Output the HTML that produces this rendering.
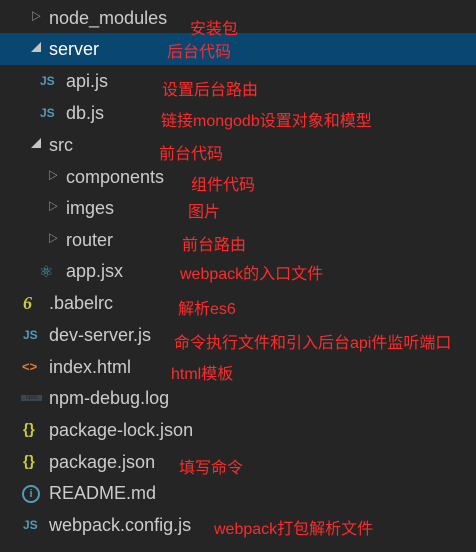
<!DOCTYPE html><html><head><meta charset="utf-8"><style>
body{margin:0;width:476px;height:552px;background:#252526;overflow:hidden;position:relative;font-family:"Liberation Sans","Noto Sans CJK SC",sans-serif}
.r{position:absolute;left:0;width:476px;height:32px;}
.t{position:absolute;color:#cccccc;font-size:18px;line-height:32px;white-space:nowrap}
.a{position:absolute;color:#ff2b2b;font-size:16px;white-space:nowrap;font-family:"Liberation Sans","WenQuanYi Zen Hei",sans-serif}
.js{position:absolute;color:#519aba;font-size:12px;font-weight:bold;line-height:32px}
.ar{position:absolute;color:#c5c5c5;font-size:10px;line-height:32px}
.y{position:absolute;color:#cbcb41;font-size:15px;font-weight:bold;line-height:32px}
</style></head><body>
<div class="r" style="top:33px;background:#094771"></div>
<span class="ar" style="left:31px;top:2px">&#9655;</span><span class="t" style="left:49px;top:2px">node_modules</span>
<span class="ar" style="left:31px;top:33px">&#9698;</span><span class="t" style="left:49px;top:33px;color:#fff">server</span>
<span class="js" style="left:40px;top:65px">JS</span><span class="t" style="left:66px;top:65px">api.js</span>
<span class="js" style="left:40px;top:97px">JS</span><span class="t" style="left:66px;top:97px">db.js</span>
<span class="ar" style="left:31px;top:129px">&#9698;</span><span class="t" style="left:49px;top:129px">src</span>
<span class="ar" style="left:48px;top:161px">&#9655;</span><span class="t" style="left:66px;top:161px">components</span>
<span class="ar" style="left:48px;top:192px">&#9655;</span><span class="t" style="left:66px;top:192px">imges</span>
<span class="ar" style="left:48px;top:224px">&#9655;</span><span class="t" style="left:66px;top:224px">router</span>
<span style="position:absolute;left:39px;top:262px;color:#519aba;font-size:16px">&#9883;</span><span class="t" style="left:66px;top:255px">app.jsx</span>
<span class="y" style="left:23px;top:287px;font-style:italic;font-family:'Liberation Serif',serif;font-size:18px">6</span><span class="t" style="left:49px;top:287px">.babelrc</span>
<span class="js" style="left:23px;top:319px">JS</span><span class="t" style="left:49px;top:319px">dev-server.js</span>
<span class="js" style="left:22px;top:351px;color:#e37933;font-size:13px">&lt;&gt;</span><span class="t" style="left:49px;top:351px">index.html</span>
<span style="position:absolute;left:21px;top:395px;width:21px;height:6px;background:#3a4650;color:#252526;font-size:6px;line-height:6px;text-align:center">npm</span><span class="t" style="left:49px;top:382px">npm-debug.log</span>
<span class="y" style="left:23px;top:414px">{}</span><span class="t" style="left:49px;top:414px">package-lock.json</span>
<span class="y" style="left:23px;top:446px">{}</span><span class="t" style="left:49px;top:446px">package.json</span>
<span style="position:absolute;left:22px;top:485px;width:14px;height:14px;border:2px solid #519aba;border-radius:50%;color:#519aba;font-size:11px;font-weight:bold;line-height:14px;text-align:center">i</span><span class="t" style="left:49px;top:477px">README.md</span>
<span class="js" style="left:23px;top:509px">JS</span><span class="t" style="left:49px;top:509px">webpack.config.js</span>
<span class="a" style="left:190px;top:15px">安装包</span>
<span class="a" style="left:167px;top:38px">后台代码</span>
<span class="a" style="left:162px;top:76px">设置后台路由</span>
<span class="a" style="left:161px;top:107px">链接mongodb设置对象和模型</span>
<span class="a" style="left:159px;top:140px">前台代码</span>
<span class="a" style="left:191px;top:171px">组件代码</span>
<span class="a" style="left:188px;top:198px">图片</span>
<span class="a" style="left:182px;top:231px">前台路由</span>
<span class="a" style="left:180px;top:260px">webpack的入口文件</span>
<span class="a" style="left:178px;top:295px">解析es6</span>
<span class="a" style="left:174px;top:329px">命令执行文件和引入后台api件监听端口</span>
<span class="a" style="left:171px;top:360px">html模板</span>
<span class="a" style="left:179px;top:454px">填写命令</span>
<span class="a" style="left:214px;top:515px">webpack打包解析文件</span>
</body></html>
